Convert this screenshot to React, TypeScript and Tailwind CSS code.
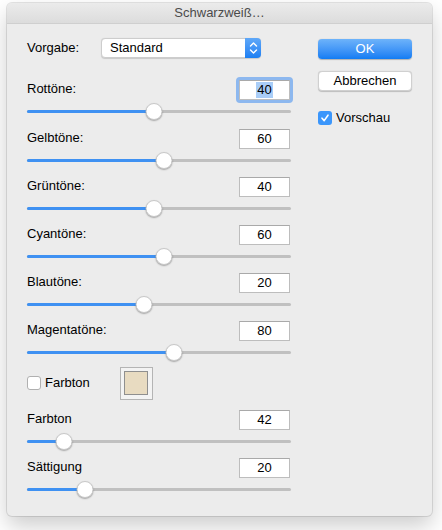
import React from 'react';

type SliderRow = {
  label: string;
  value: number;
  min: number;
  max: number;
  focused?: boolean;
};

const TONES: SliderRow[] = [
  { label: 'Rottöne:', value: 40, min: -200, max: 300, focused: true },
  { label: 'Gelbtöne:', value: 60, min: -200, max: 300 },
  { label: 'Grüntöne:', value: 40, min: -200, max: 300 },
  { label: 'Cyantöne:', value: 60, min: -200, max: 300 },
  { label: 'Blautöne:', value: 20, min: -200, max: 300 },
  { label: 'Magentatöne:', value: 80, min: -200, max: 300 },
];

const TINT: SliderRow[] = [
  { label: 'Farbton', value: 42, min: 0, max: 360 },
  { label: 'Sättigung', value: 20, min: 0, max: 100 },
];

function Slider({ value, min, max }: { value: number; min: number; max: number }) {
  // thumb centre travels between 8px and width-8px
  const pct = (value - min) / (max - min);
  const left = `calc(8px + (100% - 16px) * ${pct})`;
  return (
    <div className="relative h-[22px] w-full">
      <div className="absolute left-0 right-0 top-[10px] h-[3px] rounded-full bg-[#c0c0c0]" />
      <div className="absolute left-0 top-[10px] h-[3px] rounded-full bg-[#3f91f2]" style={{ width: left }} />
      <div
        className="absolute top-[3px] h-[17px] w-[17px] -translate-x-1/2 rounded-full border border-[#c8c8c8] bg-white shadow-[0_1px_1.5px_rgba(0,0,0,0.3)]"
        style={{ left }}
      />
    </div>
  );
}

function NumberBox({ value, focused }: { value: number; focused?: boolean }) {
  const box = (
    <div className="flex h-[20px] w-[51px] items-center justify-center border border-[#bdbdbd] border-t-[#a9a9a9] bg-white text-[13px] text-black">
      {focused ? <span className="bg-[#a9cdf7] px-[1px] leading-[16px]">{value}</span> : value}
    </div>
  );
  if (!focused) return box;
  return <div className="-m-[3px] rounded-[4px] bg-[#8db8ef] p-[3px]">{box}</div>;
}

function Row({ row, className }: { row: SliderRow; className?: string }) {
  return (
    <div className={className}>
      <div className="flex h-[20px] items-center justify-between pr-[1px]">
        <span className="-mt-[2px]">{row.label}</span>
        <NumberBox value={row.value} focused={row.focused} />
      </div>
      <Slider value={row.value} min={row.min} max={row.max} />
    </div>
  );
}

export default function App() {
  return (
    <div
      className="h-[530px] w-[442px] bg-white pl-[7px] pt-[3px] text-[13px] text-black"
      style={{ fontFamily: '"Liberation Sans", Arial, sans-serif' }}
    >
      <div className="flex h-[513px] w-[425px] flex-col rounded-[5px] bg-[#ececec] shadow-[0_10px_22px_rgba(0,0,0,0.2),0_0_0_1px_rgba(0,0,0,0.1)]">
        {/* title bar */}
        <div className="flex h-[21px] items-center justify-center rounded-t-[5px] border-b border-[#cfcfcf] bg-gradient-to-b from-[#ebebeb] to-[#dcdcdc] text-[13px] text-[#4b4b4b]">
          Schwarzweiß…
        </div>

        <div className="flex pl-[20px]">
          {/* left column */}
          <div className="w-[264px]">
            <div className="mt-[14px] flex h-[20px] items-center">
              <span className="w-[74px]">Vorgabe:</span>
              <div className="flex h-[20px] w-[160px] items-center rounded-[4px] border border-[#cdcdcd] bg-white shadow-[0_0.5px_1px_rgba(0,0,0,0.15)]">
                <span className="flex-1 pl-[8px]">Standard</span>
                <div className="flex h-[20px] w-[16px] -mr-[1px] flex-col items-center justify-center rounded-r-[4px] bg-gradient-to-b from-[#5fa8f8] to-[#1a7ff3]">
                  <svg width="9" height="14" viewBox="0 0 9 14" fill="none" stroke="white" strokeWidth="1.4" strokeLinecap="round" strokeLinejoin="round">
                    <path d="M1.5 5 L4.5 2 L7.5 5" />
                    <path d="M1.5 9 L4.5 12 L7.5 9" />
                  </svg>
                </div>
              </div>
            </div>

            <div className="mt-[22px] flex flex-col">
              {TONES.map((t, i) => (
                <Row key={t.label} row={t} className={i === 0 ? 'h-[49px]' : i === TONES.length - 1 ? 'h-[44px]' : 'h-[48px]'} />
              ))}
            </div>

            <div className="flex h-[36px] items-center">
              <div className="h-[14px] w-[14px] rounded-[3px] border border-[#b0b0b0] bg-white" />
              <span className="ml-[4px]">Farbton</span>
              <div className="ml-[30px] flex h-[33px] w-[33px] items-center justify-center border border-[#b4b4b4] bg-[#f3f3f3]">
                <div className="h-[24px] w-[24px] border border-[#8f8f8f] bg-[#e8dbc1]" />
              </div>
            </div>

            <div className="mt-[9px] flex flex-col">
              {TINT.map((t) => (
                <Row key={t.label} row={t} className="h-[48px]" />
              ))}
            </div>
          </div>

          {/* right column */}
          <div className="ml-[27px] mt-[15px] flex w-[94px] flex-col">
            <div className="flex h-[20px] items-center justify-center rounded-[4px] bg-gradient-to-b from-[#6db3fa] to-[#0f7cf3] text-white shadow-[0_0.5px_1px_rgba(0,0,0,0.25)]">
              OK
            </div>
            <div className="mt-[12px] flex h-[20px] items-center justify-center rounded-[4px] border border-[#d0d0d0] bg-white shadow-[0_0.5px_1px_rgba(0,0,0,0.2)]">
              Abbrechen
            </div>
            <div className="mt-[17px] flex items-center">
              <div className="flex h-[14px] w-[14px] items-center justify-center rounded-[3px] bg-[#3b96fb]">
                <svg width="10" height="10" viewBox="0 0 10 10" fill="none" stroke="white" strokeWidth="1.6" strokeLinecap="round" strokeLinejoin="round">
                  <path d="M2 5.2 L4.2 7.6 L8 2.2" />
                </svg>
              </div>
              <span className="ml-[4px]">Vorschau</span>
            </div>
          </div>
        </div>
      </div>
    </div>
  );
}
